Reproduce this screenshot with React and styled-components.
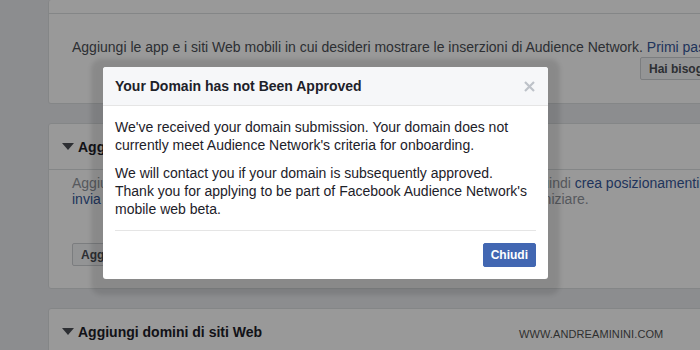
import React from 'react'
import styled, { createGlobalStyle } from 'styled-components'

const GlobalStyle = createGlobalStyle`
  html, body {
    margin: 0;
    padding: 0;
    background: #e9ebee;
    overflow: hidden;
  }
  body {
    font-family: "Liberation Sans", Arial, Helvetica, sans-serif;
    color: #1d2129;
  }
`

const Page = styled.div`
  position: relative;
  width: 700px;
  height: 350px;
  overflow: hidden;
  background: #e9ebee;
`

const Column = styled.div`
  display: flex;
  flex-direction: column;
  gap: 19px;
  padding-left: 48px;
  width: 772px;
`

const Card = styled.section`
  background: #fff;
  border: 1px solid #dddfe2;
  border-radius: 3px;
  border-top-width: ${(p) => (p.$cut ? 0 : 1)}px;
`

const CardTop = styled.div`
  height: 13px;
  border-bottom: 1px solid #dddfe2;
`

const CardHeader = styled.div`
  display: flex;
  align-items: center;
  gap: 4px;
  height: 45px;
  padding: 0 13px;
  font-size: 14px;
  font-weight: bold;
  color: #1d2129;
  border-bottom: ${(p) => (p.$open ? '1px solid #dddfe2' : 'none')};
`

const Triangle = styled.span`
  width: 0;
  height: 0;
  border-left: 6px solid transparent;
  border-right: 6px solid transparent;
  border-top: 7px solid #4b4f56;
`

const CardBody = styled.div`
  padding: ${(p) => p.$pad || '24px 23px 22px'};
  font-size: 14px;
  line-height: ${(p) => p.$lh || '18px'};
  color: ${(p) => p.$color || '#4b4f56'};
  white-space: nowrap;
`

const Link = styled.span`
  color: #365899;
`

const Right = styled.div`
  display: flex;
  justify-content: flex-end;
  padding-right: 16px;
`

const GreyButton = styled.button`
  height: 23px;
  padding: 0 8px;
  margin-top: ${(p) => p.$mt || 0}px;
  font-family: inherit;
  font-size: 12px;
  font-weight: bold;
  color: #4b4f56;
  background: #f6f7f9;
  border: 1px solid #ced0d4;
  border-radius: 2px;
`

const Overlay = styled.div`
  position: absolute;
  inset: 0;
  background: rgba(0, 0, 0, 0.4);
`

const Modal = styled.div`
  position: absolute;
  left: 103px;
  top: 67px;
  width: 445px;
  background: #fff;
  border-radius: 3px;
  box-shadow: 0 4px 4px 12px rgba(0, 0, 0, 0.1);
  overflow: hidden;
`

const ModalHeader = styled.div`
  display: flex;
  align-items: center;
  justify-content: space-between;
  padding: 10px 12px;
  line-height: 18px;
  background: #f6f7f9;
  border-bottom: 1px solid #e5e5e5;
`

const ModalTitle = styled.h3`
  margin: 0;
  font-size: 14px;
  font-weight: bold;
  color: #1d2129;
`

const Close = styled.span`
  display: flex;
  margin-right: 1px;
`

const ModalBody = styled.div`
  margin: 0 12px;
  padding: 12px 0 12px;
  border-bottom: 1px solid #e5e5e5;
  font-size: 14px;
  line-height: 18px;
  color: #1d2129;

  p {
    margin: 0 0 10px;
  }
  p:last-child {
    margin-bottom: 0;
  }
`

const ModalFooter = styled.div`
  display: flex;
  justify-content: flex-end;
  padding: 12px;
`

const BlueButton = styled.button`
  height: 24px;
  padding: 0 7px;
  font-family: inherit;
  font-size: 12px;
  font-weight: bold;
  color: #fff;
  background: #4267b2;
  border: 1px solid #4267b2;
  border-radius: 2px;
`

const Watermark = styled.div`
  position: absolute;
  left: 519px;
  top: 328px;
  font-size: 11px;
  letter-spacing: 0.1px;
  color: #2f2f2f;
`

const App = () => (
  <Page>
    <GlobalStyle />
    <Column>
      <Card $cut>
        <CardTop />
        <CardBody $pad="24px 23px 23px">
          <div>
            Aggiungi le app e i siti Web mobili in cui desideri mostrare le inserzioni di
            Audience Network. <Link>Primi passi</Link>
          </div>
          <Right>
            <GreyButton $mt={1}>Hai bisogno di aiuto?</GreyButton>
          </Right>
        </CardBody>
      </Card>

      <Card>
        <CardHeader $open>
          <Triangle />
          Aggiungi app
        </CardHeader>
        <CardBody $pad="5px 23px 22px" $lh="16px" $color="#90949c">
          <div>
            Aggiungi le app mobili che hai già creato su Facebook o in altri app store. Quindi{' '}
            <Link>crea posizionamenti</Link>
          </div>
          <div>
            <Link>invia</Link> la tua app o il tuo sito alla revisione di Audience Network per
            poter poi iniziare.
          </div>
          <GreyButton $mt={36}>Aggiungi app</GreyButton>
        </CardBody>
      </Card>

      <Card>
        <CardHeader>
          <Triangle />
          Aggiungi domini di siti Web
        </CardHeader>
      </Card>
    </Column>

    <Overlay>
      <Modal>
        <ModalHeader>
          <ModalTitle>Your Domain has not Been Approved</ModalTitle>
          <Close>
            <svg width="11" height="11" viewBox="0 0 11 11">
              <path d="M1 1 L10 10 M10 1 L1 10" stroke="#bec2c9" strokeWidth="2.2" />
            </svg>
          </Close>
        </ModalHeader>
        <ModalBody>
          <p>
            We've received your domain submission. Your domain does not
            <br />
            currently meet Audience Network's criteria for onboarding.
          </p>
          <p>
            We will contact you if your domain is subsequently approved.
            <br />
            Thank you for applying to be part of Facebook Audience Network's
            <br />
            mobile web beta.
          </p>
        </ModalBody>
        <ModalFooter>
          <BlueButton>Chiudi</BlueButton>
        </ModalFooter>
      </Modal>
      <Watermark>WWW.ANDREAMININI.COM</Watermark>
    </Overlay>
  </Page>
)

export default App
